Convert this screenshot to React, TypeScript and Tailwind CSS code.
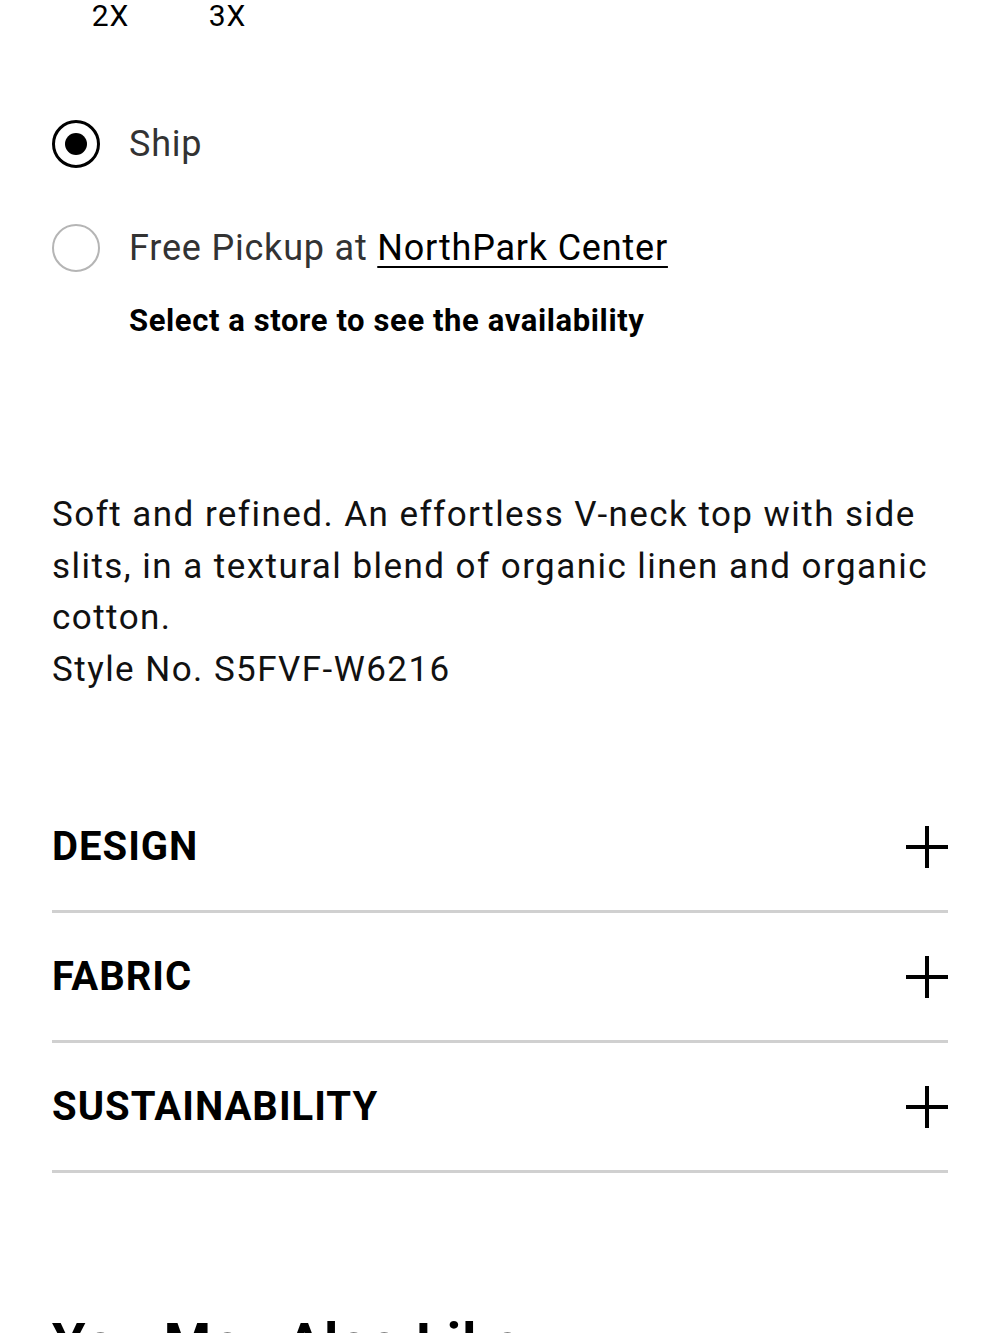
import { useState } from "react";

const sizes = ["2X", "3X"];
const sections = ["DESIGN", "FABRIC", "SUSTAINABILITY"];

function Radio({ checked }: { checked: boolean }) {
  return (
    <span
      className={`flex h-[48px] w-[48px] shrink-0 items-center justify-center rounded-full ${
        checked ? "border-[3px] border-black" : "border-2 border-[#b5b5b5]"
      }`}
    >
      {checked && <span className="h-[22px] w-[22px] rounded-full bg-black" />}
    </span>
  );
}

function PlusIcon() {
  return (
    <svg width="42" height="42" viewBox="0 0 42 42" className="shrink-0">
      <path d="M21 0V42M0 21H42" stroke="#000" strokeWidth="4" />
    </svg>
  );
}

export default function App() {
  const [delivery, setDelivery] = useState<"ship" | "pickup">("ship");

  return (
    <div
      className="min-h-[1333px] w-[1000px] overflow-hidden bg-white px-[52px] text-black"
      style={{ fontFamily: "Roboto, 'Liberation Sans', sans-serif" }}
    >
      <div className="flex h-[30px] pt-[1px]">
        {sizes.map((s) => (
          <span key={s} className="w-[117px] text-center text-[30px] leading-[30px] tracking-[1px]">
            {s}
          </span>
        ))}
      </div>

      <div className="mt-[90px]">
        <button
          type="button"
          onClick={() => setDelivery("ship")}
          className="flex h-[48px] items-center gap-[29px]"
        >
          <Radio checked={delivery === "ship"} />
          <span className="text-[36px] tracking-[0.8px] text-[#333]">Ship</span>
        </button>
        <button
          type="button"
          onClick={() => setDelivery("pickup")}
          className="mt-[56px] flex h-[48px] items-center gap-[29px]"
        >
          <Radio checked={delivery === "pickup"} />
          <span className="text-[36px] tracking-[0.8px] text-[#333]">
            Free Pickup at{" "}
            <span className="text-black underline decoration-2 underline-offset-[6px]">
              NorthPark Center
            </span>
          </span>
        </button>
        <p className="mt-[29px] pl-[77px] text-[31px] font-bold leading-[40px] tracking-[0.6px]">
          Select a store to see the availability
        </p>
      </div>

      <div className="mt-[148px] text-[35px] leading-[51.5px] tracking-[1.45px] text-[#111]">
        <p>
          Soft and refined. An effortless V-neck top with side slits, in a textural blend of organic linen
          and organic cotton.
        </p>
        <p>Style No. S5FVF-W6216</p>
      </div>

      <div className="mt-[88px]">
        {sections.map((s) => (
          <div
            key={s}
            className="flex h-[130px] items-center justify-between border-b-[3px] border-[#d0d0d0]"
          >
            <span className="text-[40px] font-bold tracking-[1px]">{s}</span>
            <PlusIcon />
          </div>
        ))}
      </div>

      <h2 className="mt-[140px] text-[54px] font-bold leading-[60px] tracking-[1.5px]">You May Also Like</h2>
    </div>
  );
}
